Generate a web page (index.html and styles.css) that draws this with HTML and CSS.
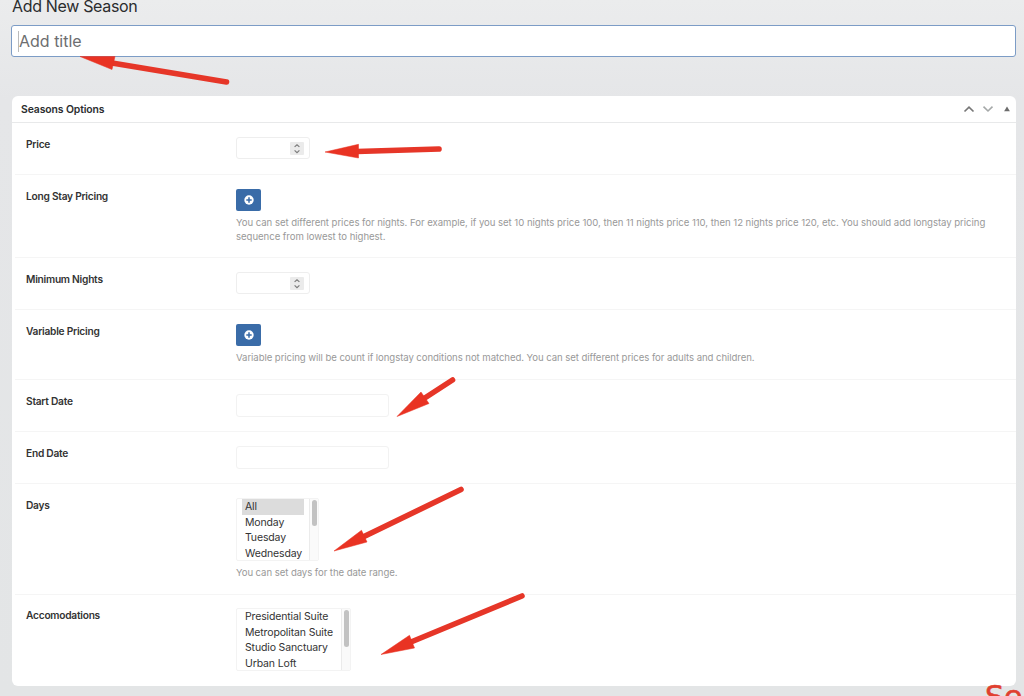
FILE: index.html
```html
<!DOCTYPE html>
<html lang="en">
<head>
    <meta charset="UTF-8">
    <meta name="viewport" content="width=device-width, initial-scale=1.0">
    <title>Add New Season</title>
    <link rel="stylesheet" href="styles.css">
</head>
<body>
    <main class="page">
        <h1>Add New Season</h1>
        <div class="title-box"><span class="caret"></span>Add title</div>

        <section class="panel">
            <header class="panel-header">
                <h2>Seasons Options</h2>
                <div class="panel-actions">
                    <svg width="12" height="8" viewBox="0 0 12 8"><path d="M1.500 6.500L6 2.200l4.500 4.300" fill="none" stroke="#777" stroke-width="1.700"/></svg>
                    <svg width="12" height="8" viewBox="0 0 12 8"><path d="M1.500 1.700L6 6l4.500-4.300" fill="none" stroke="#a5a8a8" stroke-width="1.600"/></svg>
                    <svg width="6" height="6" viewBox="0 0 6 6"><path d="M3 .5L5.900 5.200H.1z" fill="#6c6c6c"/></svg>
                </div>
            </header>

            <div class="row row-short">
                <h3>Price</h3>
                <div class="field">
                    <div class="number-input">
                        <span class="spinner"><svg width="14" height="13" viewBox="0 0 14 13"><path d="M4.600 4.900L7 2.700l2.400 2.200M4.600 8.400l2.400 2.200 2.400-2.200" fill="none" stroke="#7c7c7c" stroke-width="1.200"/></svg></span>
                    </div>
                </div>
            </div>

            <div class="row row-long-stay">
                <h3>Long Stay Pricing</h3>
                <div class="field">
                    <button class="add-button"><svg width="10" height="10" viewBox="0 0 10 10"><circle cx="5" cy="5" r="4.700" fill="#fff"/><path d="M5 2.300v5.400M2.300 5h5.400" stroke="#3a6ca8" stroke-width="1.500"/></svg></button>
                    <p class="long-stay-note">You can set different prices for nights. For example, if you set 10 nights price 100, then 11 nights price 110, then 12 nights price 120, etc. You should add longstay pricing<br>sequence from lowest to highest.</p>
                </div>
            </div>

            <div class="row row-short">
                <h3>Minimum Nights</h3>
                <div class="field">
                    <div class="number-input">
                        <span class="spinner"><svg width="14" height="13" viewBox="0 0 14 13"><path d="M4.600 4.900L7 2.700l2.400 2.200M4.600 8.400l2.400 2.200 2.400-2.200" fill="none" stroke="#7c7c7c" stroke-width="1.200"/></svg></span>
                    </div>
                </div>
            </div>

            <div class="row row-variable">
                <h3>Variable Pricing</h3>
                <div class="field">
                    <button class="add-button"><svg width="10" height="10" viewBox="0 0 10 10"><circle cx="5" cy="5" r="4.700" fill="#fff"/><path d="M5 2.300v5.400M2.300 5h5.400" stroke="#3a6ca8" stroke-width="1.500"/></svg></button>
                    <p>Variable pricing will be count if longstay conditions not matched. You can set different prices for adults and children.</p>
                </div>
            </div>

            <div class="row row-short">
                <h3>Start Date</h3>
                <div class="field"><div class="date-input"></div></div>
            </div>

            <div class="row row-short">
                <h3>End Date</h3>
                <div class="field"><div class="date-input"></div></div>
            </div>

            <div class="row row-days">
                <h3>Days</h3>
                <div class="field">
                    <div class="list days-list">
                        <ul>
                            <li class="selected">All</li>
                            <li>Monday</li>
                            <li>Tuesday</li>
                            <li>Wednesday</li>
                        </ul>
                        <div class="scrollbar"><span class="thumb"></span></div>
                    </div>
                    <p>You can set days for the date range.</p>
                </div>
            </div>

            <div class="row row-rooms">
                <h3>Accomodations</h3>
                <div class="field">
                    <div class="list rooms-list">
                        <ul>
                            <li>Presidential Suite</li>
                            <li>Metropolitan Suite</li>
                            <li>Studio Sanctuary</li>
                            <li>Urban Loft</li>
                        </ul>
                        <div class="scrollbar"><span class="thumb"></span></div>
                    </div>
                </div>
            </div>
        </section>
    </main>

    <!-- Red callouts over the form -->
    <svg class="arrows" width="1024" height="696" viewBox="0 0 1024 696">
        <path class="shaft" d="M112 63L226.500 82"/>
        <path class="head" d="M80 56.500H115L112 69.500z"/>
        <path class="shaft" d="M357 151.500L439 149"/>
        <path class="head" d="M325 152L358.500 144.300V158z"/>
        <path class="shaft" d="M424 398.500L452.500 380"/>
        <path class="head" d="M397 416.500L421 392L429 403.500z"/>
        <path class="shaft" d="M363 537L461 489.500"/>
        <path class="head" d="M334 551L361.500 530.300L367 542z"/>
        <path class="shaft" d="M411 642L522 596"/>
        <path class="head" d="M381 654.500L409.500 635.300L414.500 648z"/>
    </svg>
    <div class="note">Se</div>
</body>
</html>
```
FILE: styles.css
```css
* {
    box-sizing: border-box;
}

body {
    margin: 0;
    width: 1024px;
    height: 696px;
    overflow: hidden;
    position: relative;
    background: linear-gradient(#ebeced, #e5e6e8 100px, #e3e5e6);
    font-family: Inter, "Liberation Sans", sans-serif;
    color: #333;
}

h1, h2, h3, p, ul {
    margin: 0;
    padding: 0;
}

.page {
    padding: 0 8px 0 11px;
}

h1 {
    height: 25px;
    padding-left: 1px;
    font-size: 16px;
    line-height: 13px;
    font-weight: 400;
    letter-spacing: -0.33px;
    color: #2a2c2e;
}

.title-box {
    display: flex;
    align-items: center;
    height: 32px;
    padding-left: 6px;
    background: #fff;
    border: 1px solid #7c9cc6;
    border-radius: 3px;
    font-size: 16px;
    color: #6d6e70;
}

.caret {
    width: 1px;
    height: 21px;
    background: #bbb;
}

.panel {
    margin: 39px 0 0 1px;
    height: 590px;
    background: #fff;
    border-radius: 6px;
}

.panel-header {
    display: flex;
    justify-content: space-between;
    align-items: center;
    height: 27px;
    padding: 0 6px 0 9px;
    border-bottom: 1px solid #e8e9ea;
}

h2 {
    font-size: 10.4px;
    font-weight: 600;
    letter-spacing: -0.1px;
    color: #2b2d2f;
}

.panel-actions {
    display: flex;
    align-items: center;
    gap: 7px;
    margin-right: 1px;
}

.panel-actions svg:last-child {
    margin-left: 3px;
    margin-right: -1px;
}

.row {
    display: flex;
    margin-left: 3px;
    padding: 14px 0 0 11px;
    border-bottom: 1px solid #f5f5f5;
}

.row-short {
    height: 52px;
}

.row-long-stay {
    height: 83px;
}

.row-variable {
    height: 70px;
}

.row-days {
    height: 111px;
}

.row-rooms {
    height: 90px;
    padding-top: 13px;
    border-bottom: none;
}

h3 {
    width: 210px;
    padding-top: 1px;
    font-size: 10.2px;
    line-height: 13px;
    font-weight: 600;
    letter-spacing: -0.25px;
    color: #333;
}

.number-input {
    display: flex;
    justify-content: flex-end;
    align-items: center;
    width: 74px;
    height: 22px;
    padding-right: 5px;
    border: 1px solid #eee;
    border-radius: 3px;
}

.spinner {
    width: 14px;
    height: 13px;
    background: #ebebeb;
    border-radius: 1px;
}

.spinner svg {
    display: block;
}

.date-input {
    width: 153px;
    height: 23px;
    border: 1px solid #f2f2f2;
    border-radius: 3px;
}

.add-button {
    display: flex;
    align-items: center;
    justify-content: center;
    width: 25px;
    height: 22px;
    padding: 0;
    background: #3a6ca8;
    border: none;
    border-radius: 2px;
}

.field p {
    margin-top: 5px;
    font-size: 9.6px;
    line-height: 13.5px;
    letter-spacing: -0.07px;
    color: #999;
    white-space: nowrap;
}

.field .long-stay-note {
    letter-spacing: -0.043px;
}

.list {
    display: flex;
    justify-content: space-between;
    height: 63px;
    border: 1px solid #f3f3f3;
    border-radius: 2px;
    overflow: hidden;
}

.days-list {
    width: 83px;
}

.rooms-list {
    width: 115px;
}

.list ul {
    list-style: none;
    padding-left: 5px;
}

.list li {
    padding-left: 3px;
    font-size: 10.5px;
    line-height: 15.6px;
    letter-spacing: -0.14px;
    white-space: nowrap;
}

.list .selected {
    width: 62px;
    background: #dcdcdc;
}

.scrollbar {
    width: 9px;
    padding: 1px 1px 0 2px;
    background: #fafafa;
    border-left: 1px solid #ebebeb;
}

.thumb {
    display: block;
    width: 5px;
    height: 26px;
    background: #c2c2c2;
    border-radius: 3px;
}

.rooms-list .thumb {
    height: 37px;
}

/* Callouts */
.arrows {
    position: absolute;
    left: 0;
    top: 0;
}

.shaft {
    stroke: #e63628;
    stroke-width: 5.6;
    stroke-linecap: round;
}

.head {
    fill: #e93323;
    stroke: #e93323;
    stroke-width: 0.5;
}

.note {
    position: absolute;
    left: 985px;
    top: 679px;
    font-family: "DejaVu Sans", sans-serif;
    font-size: 30px;
    line-height: 35px;
    color: #e0402f;
    -webkit-text-stroke: 0.6px #e0402f;
}
```
